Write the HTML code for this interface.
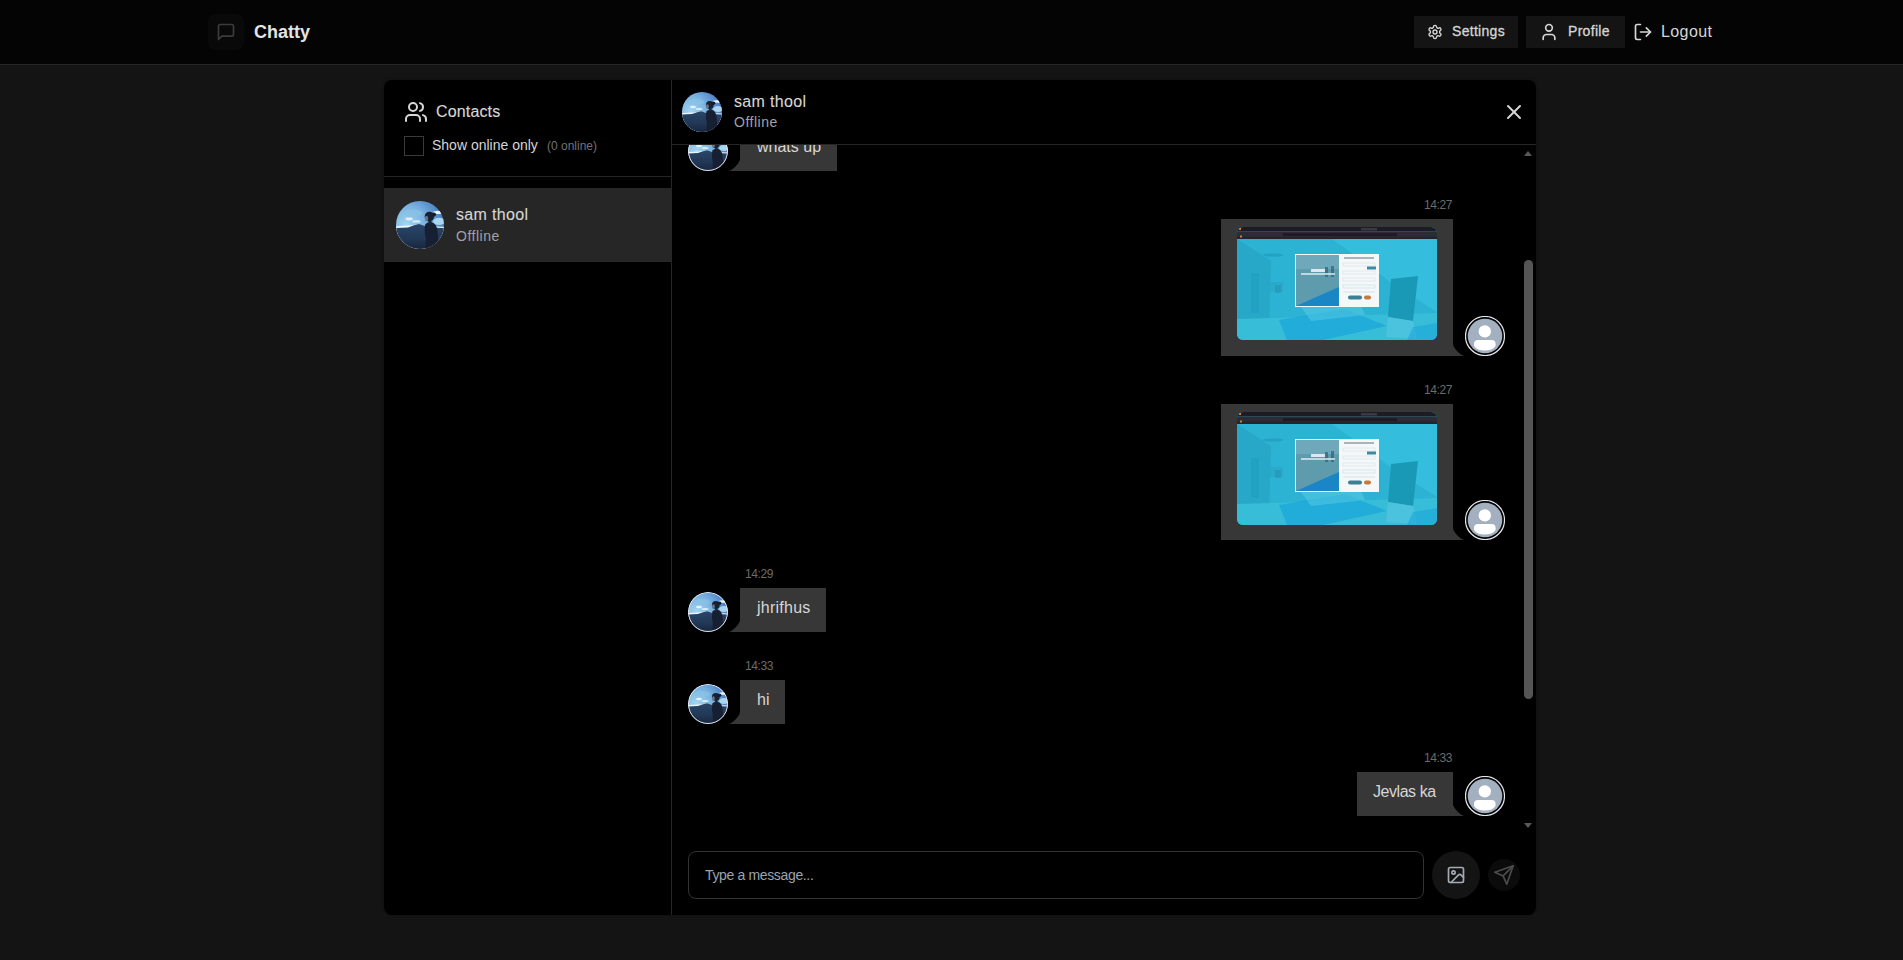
<!DOCTYPE html>
<html><head><meta charset="utf-8"><title>Chatty</title>
<style>
*{box-sizing:border-box;margin:0;padding:0}
html,body{width:1903px;height:960px;overflow:hidden;background:#141414;font-family:"Liberation Sans",sans-serif;color:#d6d6d6}
.a{position:absolute}
.t{position:absolute;white-space:nowrap;line-height:1}
svg.i{position:absolute;fill:none;stroke:currentColor;stroke-width:2;stroke-linecap:round;stroke-linejoin:round}
.bub{position:absolute;background:#373737}
.tail{position:absolute;width:12px;height:12px;fill:#373737}
.tm{position:absolute;white-space:nowrap;line-height:1;font-size:12px;color:#6b6b6b;letter-spacing:-0.4px}
.msg{position:absolute;white-space:nowrap;line-height:1;font-size:16px;color:#d6d6d6}
</style></head>
<body>
<svg width="0" height="0" style="position:absolute">
<defs>
<clipPath id="cc"><circle cx="24" cy="24" r="24"/></clipPath><clipPath id="cc40"><circle cx="20" cy="20" r="20"/></clipPath>
<linearGradient id="sky" x1="0" y1="0" x2="0.3" y2="1">
<stop offset="0" stop-color="#4f86cc"/><stop offset="0.35" stop-color="#7fb6e4"/><stop offset="0.55" stop-color="#b4ddf2"/></linearGradient>
<radialGradient id="sky2" cx="0.22" cy="0.5" r="0.85"><stop offset="0" stop-color="#a4d6f0"/><stop offset="0.5" stop-color="#76b0e0"/><stop offset="1" stop-color="#3f6fbc"/></radialGradient>
<linearGradient id="sea2" x1="0" y1="0" x2="0" y2="1"><stop offset="0" stop-color="#2a4669"/><stop offset="0.6" stop-color="#213756"/><stop offset="1" stop-color="#17263d"/></linearGradient>
<linearGradient id="sea" x1="0" y1="0" x2="0" y2="1">
<stop offset="0" stop-color="#2e5078"/><stop offset="1" stop-color="#1b2f4a"/></linearGradient>
<clipPath id="shotclip"><rect width="200" height="113" rx="6" ry="6"/></clipPath>
</defs>
</svg>

<!-- HEADER -->
<div class="a" style="left:0;top:0;width:1903px;height:64px;background:#040404"></div>
<div class="a" style="left:0;top:64px;width:1903px;height:1px;background:#262626"></div>
<div class="a" style="left:208px;top:14px;width:36px;height:36px;border-radius:8px;background:#090909"></div>
<svg class="i" style="left:216px;top:22px;color:#3c3c3c" width="20" height="20" viewBox="0 0 24 24"><path d="M21 15a2 2 0 0 1-2 2H7l-4 4V5a2 2 0 0 1 2-2h14a2 2 0 0 1 2 2z"/></svg>
<div class="t" id="chatty" style="left:254px;top:23px;font-size:18px;font-weight:700;color:#e4e4e4">Chatty</div>

<div class="a" style="left:1414px;top:16px;width:104px;height:32px;background:#141414"></div>
<svg class="i" style="left:1427px;top:24px;color:#d6d6d6" width="16" height="16" viewBox="0 0 24 24"><path d="M12.22 2h-.44a2 2 0 0 0-2 2v.18a2 2 0 0 1-1 1.73l-.43.25a2 2 0 0 1-2 0l-.15-.08a2 2 0 0 0-2.73.73l-.22.38a2 2 0 0 0 .73 2.73l.15.1a2 2 0 0 1 1 1.72v.51a2 2 0 0 1-1 1.74l-.15.09a2 2 0 0 0-.73 2.73l.22.38a2 2 0 0 0 2.73.73l.15-.08a2 2 0 0 1 2 0l.43.25a2 2 0 0 1 1 1.73V20a2 2 0 0 0 2 2h.44a2 2 0 0 0 2-2v-.18a2 2 0 0 1 1-1.73l.43-.25a2 2 0 0 1 2 0l.15.08a2 2 0 0 0 2.73-.73l.22-.39a2 2 0 0 0-.73-2.73l-.15-.08a2 2 0 0 1-1-1.74v-.5a2 2 0 0 1 1-1.74l.15-.09a2 2 0 0 0 .73-2.73l-.22-.38a2 2 0 0 0-2.73-.73l-.15.08a2 2 0 0 1-2 0l-.43-.25a2 2 0 0 1-1-1.73V4a2 2 0 0 0-2-2z"/><circle cx="12" cy="12" r="3"/></svg>
<div class="t" id="settings" style="left:1452px;top:24px;font-size:14px;-webkit-text-stroke:0.3px;letter-spacing:0.3px">Settings</div>

<div class="a" style="left:1526px;top:16px;width:99px;height:32px;background:#141414"></div>
<svg class="i" style="left:1539px;top:22px;color:#d6d6d6" width="20" height="20" viewBox="0 0 24 24"><path d="M19 21v-2a4 4 0 0 0-4-4H9a4 4 0 0 0-4 4v2"/><circle cx="12" cy="7" r="4"/></svg>
<div class="t" id="profile" style="left:1568px;top:24px;font-size:14px;-webkit-text-stroke:0.3px;letter-spacing:0.3px">Profile</div>

<svg class="i" style="left:1633px;top:22px;color:#d6d6d6" width="20" height="20" viewBox="0 0 24 24"><path d="M9 21H5a2 2 0 0 1-2-2V5a2 2 0 0 1 2-2h4"/><polyline points="16 17 21 12 16 7"/><line x1="21" x2="9" y1="12" y2="12"/></svg>
<div class="t" id="logout" style="left:1661px;top:24px;font-size:16px;letter-spacing:0.4px">Logout</div>

<!-- CONTAINER -->
<div class="a" style="left:384px;top:80px;width:1152px;height:835px;background:#000;border-radius:8px;box-shadow:0 0 3px rgba(0,0,0,.3)"></div>
<div class="a" style="left:671px;top:80px;width:1px;height:835px;background:#262626"></div>

<!-- SIDEBAR -->
<svg class="i" style="left:404px;top:100px;color:#d6d6d6" width="24" height="24" viewBox="0 0 24 24"><path d="M16 21v-2a4 4 0 0 0-4-4H6a4 4 0 0 0-4 4v2"/><circle cx="9" cy="7" r="4"/><path d="M22 21v-2a4 4 0 0 0-3-3.87"/><path d="M16 3.13a4 4 0 0 1 0 7.75"/></svg>
<div class="t" id="contacts" style="left:436px;top:104px;font-size:16px;letter-spacing:0.15px;-webkit-text-stroke:0.15px">Contacts</div>
<div class="a" style="left:404px;top:136px;width:20px;height:20px;border:1px solid #3a3a3a"></div>
<div class="t" id="showon" style="left:432px;top:138px;font-size:14px">Show online only</div>
<div class="t" id="zeroon" style="left:547px;top:140px;font-size:12px;color:#71717a">(0 online)</div>
<div class="a" style="left:384px;top:176px;width:287px;height:1px;background:#262626"></div>

<div class="a" style="left:384px;top:188px;width:287px;height:74px;background:#262626"></div>
<svg class="a" style="left:396px;top:201px" width="48" height="48" viewBox="0 0 40 40"><g clip-path="url(#cc40)">
<rect width="40" height="40" fill="url(#sky2)"/>
<ellipse cx="14" cy="10" rx="8" ry="3" fill="#8cc2e6" opacity=".7"/>
<ellipse cx="11" cy="15" rx="3" ry="1.2" fill="#e4f3fa"/>
<ellipse cx="17" cy="17" rx="3.5" ry="1" fill="#d6eef8"/>
<ellipse cx="35" cy="9.5" rx="4" ry="1.3" fill="#e8f5fb"/>
<ellipse cx="36" cy="17" rx="5" ry="3" fill="#a8d6ee"/>
<path d="M0 21 Q6 20.5 11 20.5 L18 19.5 L26 21 L40 21.5 L40 40 L0 40Z" fill="#eef7fb"/>
<path d="M0 22.5 L10 22 L15 20.2 L19 19.2 L23 20.5 L28 22 L40 22.5 L40 40 L0 40Z" fill="url(#sea2)"/>
<path d="M24.3 19.5 Q26 17.3 29.5 17.8 Q33.8 19 34.6 24.5 L35.6 40 L24.5 40 L24.8 31 Q23.3 26 24.3 19.5Z" fill="#172033"/>
<ellipse cx="27.8" cy="13" rx="3.9" ry="4.1" fill="#1a2232"/>
<circle cx="31.6" cy="11.3" r="1.8" fill="#161c2a"/>
<ellipse cx="25.4" cy="14.6" rx="1.4" ry="2.3" fill="#66788a"/>
<rect x="27" y="16.5" width="2.6" height="2.5" fill="#1c2636"/>
</g></svg>
<div class="t" id="cname" style="left:456px;top:207px;font-size:16px;letter-spacing:0.35px;-webkit-text-stroke:0.1px">sam thool</div>
<div class="t" id="coff" style="left:456px;top:229px;font-size:14px;color:#a1a1aa;letter-spacing:0.5px">Offline</div>

<!-- CHAT HEADER -->
<svg class="a" style="left:682px;top:92px" width="40" height="40" viewBox="0 0 40 40"><g clip-path="url(#cc40)">
<rect width="40" height="40" fill="url(#sky2)"/>
<ellipse cx="14" cy="10" rx="8" ry="3" fill="#8cc2e6" opacity=".7"/>
<ellipse cx="11" cy="15" rx="3" ry="1.2" fill="#e4f3fa"/>
<ellipse cx="17" cy="17" rx="3.5" ry="1" fill="#d6eef8"/>
<ellipse cx="35" cy="9.5" rx="4" ry="1.3" fill="#e8f5fb"/>
<ellipse cx="36" cy="17" rx="5" ry="3" fill="#a8d6ee"/>
<path d="M0 21 Q6 20.5 11 20.5 L18 19.5 L26 21 L40 21.5 L40 40 L0 40Z" fill="#eef7fb"/>
<path d="M0 22.5 L10 22 L15 20.2 L19 19.2 L23 20.5 L28 22 L40 22.5 L40 40 L0 40Z" fill="url(#sea2)"/>
<path d="M24.3 19.5 Q26 17.3 29.5 17.8 Q33.8 19 34.6 24.5 L35.6 40 L24.5 40 L24.8 31 Q23.3 26 24.3 19.5Z" fill="#172033"/>
<ellipse cx="27.8" cy="13" rx="3.9" ry="4.1" fill="#1a2232"/>
<circle cx="31.6" cy="11.3" r="1.8" fill="#161c2a"/>
<ellipse cx="25.4" cy="14.6" rx="1.4" ry="2.3" fill="#66788a"/>
<rect x="27" y="16.5" width="2.6" height="2.5" fill="#1c2636"/>
</g></svg>
<div class="t" id="hname" style="left:734px;top:94px;font-size:16px;letter-spacing:0.35px;-webkit-text-stroke:0.1px">sam thool</div>
<div class="t" id="hoff" style="left:734px;top:115px;font-size:14px;color:#a1a1aa;letter-spacing:0.5px">Offline</div>
<svg class="i" style="left:1502px;top:100px;color:#d6d6d6" width="24" height="24" viewBox="0 0 24 24"><path d="M18 6 6 18"/><path d="m6 6 12 12"/></svg>
<div class="a" style="left:672px;top:144px;width:864px;height:1px;background:#262626"></div>

<!-- MESSAGES -->
<div class="a" id="msgs" style="left:672px;top:145px;width:864px;height:690px;overflow:hidden">
<svg class="a" style="left:16px;top:-14px;border-radius:50%" width="40" height="40" viewBox="0 0 40 40"><g clip-path="url(#cc40)">
<rect width="40" height="40" fill="url(#sky2)"/>
<ellipse cx="14" cy="10" rx="8" ry="3" fill="#8cc2e6" opacity=".7"/>
<ellipse cx="11" cy="15" rx="3" ry="1.2" fill="#e4f3fa"/>
<ellipse cx="17" cy="17" rx="3.5" ry="1" fill="#d6eef8"/>
<ellipse cx="35" cy="9.5" rx="4" ry="1.3" fill="#e8f5fb"/>
<ellipse cx="36" cy="17" rx="5" ry="3" fill="#a8d6ee"/>
<path d="M0 21 Q6 20.5 11 20.5 L18 19.5 L26 21 L40 21.5 L40 40 L0 40Z" fill="#eef7fb"/>
<path d="M0 22.5 L10 22 L15 20.2 L19 19.2 L23 20.5 L28 22 L40 22.5 L40 40 L0 40Z" fill="url(#sea2)"/>
<path d="M24.3 19.5 Q26 17.3 29.5 17.8 Q33.8 19 34.6 24.5 L35.6 40 L24.5 40 L24.8 31 Q23.3 26 24.3 19.5Z" fill="#172033"/>
<ellipse cx="27.8" cy="13" rx="3.9" ry="4.1" fill="#1a2232"/>
<circle cx="31.6" cy="11.3" r="1.8" fill="#161c2a"/>
<ellipse cx="25.4" cy="14.6" rx="1.4" ry="2.3" fill="#66788a"/>
<rect x="27" y="16.5" width="2.6" height="2.5" fill="#1c2636"/>
</g><circle cx="20" cy="20" r="19.5" fill="none" stroke="#e5e7eb" stroke-width="1"/></svg>
<div class="bub" style="left:68px;top:-18px;width:97px;height:44px"></div>
<svg class="tail" style="left:56px;top:14px" viewBox="0 0 12 12"><path d="M0 12 L12 12 L12 0 C12 4 4 12 0 12Z"/></svg>
<div class="msg" style="left:85px;top:-6px">whats up</div>
<div class="tm" style="left:600px;top:54px;width:180px;text-align:right">14:27</div>
<div class="bub" style="left:549px;top:74px;width:232px;height:137px"></div>
<svg class="tail" style="left:781px;top:199px" viewBox="0 0 12 12"><path d="M0 12 L12 12 C8 12 0 4 0 0Z"/></svg>
<svg class="a" style="left:565px;top:82px" width="200" height="113" viewBox="0 0 200 113"><g clip-path="url(#shotclip)">
<rect width="200" height="113" fill="#2cb2d2"/>
<rect width="200" height="4.5" fill="#1d1c24"/>
<rect y="4.5" width="200" height="7.5" fill="#2d2c34"/>
<rect x="46" y="6.3" width="114" height="2.6" fill="#1c1b22"/>
<rect y="9.5" width="200" height="2.5" fill="#25242c"/>
<rect x="2" y="1" width="2" height="2" fill="#d9792e"/>
<rect x="3" y="8.5" width="2" height="2" fill="#d9792e"/>
<rect x="124" y="1" width="16" height="2.5" fill="#3a3944"/>
<polygon points="95,12 200,12 200,85 160,60 120,30" fill="#3cc6e6" opacity=".55"/>
<polygon points="0,12 34,34 32,104 0,113" fill="#229cbf" opacity=".45"/>
<ellipse cx="36" cy="28" rx="10" ry="1.6" fill="#1b92b3" opacity=".5"/>
<rect x="14" y="46" width="8" height="40" fill="#1f95b8" opacity=".4"/>
<rect x="30" y="55" width="16" height="10" fill="#2aa5c6" opacity=".6"/>
<rect x="38" y="58" width="6" height="8" fill="#1d8fb0" opacity=".5"/>
<polygon points="0,92 200,86 200,113 0,113" fill="#38bdd9"/>
<polygon points="42,93 108,82 150,99 86,113 50,113" fill="#17a3d8" opacity=".65"/>
<polygon points="64,80 122,74 128,88 74,94" fill="#5fd0e8" opacity=".45"/>
<polygon points="154,52 181,49 176,94 151,90" fill="#1999b6"/>
<polygon points="151,90 176,94 180,112 149,110" fill="#55c6e0" opacity=".7"/>
<polygon points="176,100 200,96 200,113 170,113" fill="#1aa6d8" opacity=".6"/>
<rect x="58" y="27" width="84" height="53" fill="#f5f8f9"/>
<rect x="59" y="28" width="43" height="51" fill="#5e9bad"/>
<rect x="59" y="28" width="43" height="14" fill="#6fa8bb"/>
<rect x="88" y="40" width="3" height="10" fill="#2f6278" opacity=".7"/>
<rect x="94" y="39" width="3" height="11" fill="#2f6278" opacity=".7"/>
<polygon points="59,79 102,60 102,79" fill="#1a86c6"/>
<rect x="74" y="42" width="14" height="3" fill="#f2f6f8" opacity=".85"/>
<rect x="64" y="46" width="34" height="2" fill="#e8f2f4" opacity=".7"/>
<rect x="107" y="30" width="30" height="2" fill="#a9b4ba"/>
<rect x="106" y="36" width="32" height="3" fill="none" stroke="#d4dde1" stroke-width=".6"/>
<rect x="130" y="39.5" width="9" height="3" fill="#3d8aa2"/>
<rect x="106" y="44" width="32" height="3" fill="none" stroke="#d4dde1" stroke-width=".6"/>
<rect x="106" y="51" width="32" height="3" fill="none" stroke="#d4dde1" stroke-width=".6"/>
<rect x="106" y="58" width="32" height="3" fill="none" stroke="#bfd9e6" stroke-width=".6"/>
<rect x="106" y="64" width="32" height="2" fill="#e6ecef"/>
<rect x="111" y="68.5" width="14" height="4" rx="2" fill="#3b7f95"/>
<rect x="127" y="68.5" width="7" height="4" rx="2" fill="#c47a3c"/>
</g></svg>
<svg class="a" style="left:793px;top:171px" width="40" height="40" viewBox="0 0 40 40"><circle cx="20" cy="20" r="19.5" fill="#000" stroke="#e5e7eb" stroke-width="1.2"/>
<circle cx="20" cy="20" r="17.3" fill="#a3b0c0"/>
<circle cx="19.8" cy="15.4" r="6.2" fill="#fff"/>
<path d="M13 24 h13.6 a4 4 0 0 1 4 4 v2 q-3 4.6 -10.8 4.6 q-7.8 0 -10.8 -4.6 v-2 a4 4 0 0 1 4 -4z" fill="#fff"/></svg>
<div class="tm" style="left:600px;top:239px;width:180px;text-align:right">14:27</div>
<div class="bub" style="left:549px;top:259px;width:232px;height:136px"></div>
<svg class="tail" style="left:781px;top:383px" viewBox="0 0 12 12"><path d="M0 12 L12 12 C8 12 0 4 0 0Z"/></svg>
<svg class="a" style="left:565px;top:267px" width="200" height="113" viewBox="0 0 200 113"><g clip-path="url(#shotclip)">
<rect width="200" height="113" fill="#2cb2d2"/>
<rect width="200" height="4.5" fill="#1d1c24"/>
<rect y="4.5" width="200" height="7.5" fill="#2d2c34"/>
<rect x="46" y="6.3" width="114" height="2.6" fill="#1c1b22"/>
<rect y="9.5" width="200" height="2.5" fill="#25242c"/>
<rect x="2" y="1" width="2" height="2" fill="#d9792e"/>
<rect x="3" y="8.5" width="2" height="2" fill="#d9792e"/>
<rect x="124" y="1" width="16" height="2.5" fill="#3a3944"/>
<polygon points="95,12 200,12 200,85 160,60 120,30" fill="#3cc6e6" opacity=".55"/>
<polygon points="0,12 34,34 32,104 0,113" fill="#229cbf" opacity=".45"/>
<ellipse cx="36" cy="28" rx="10" ry="1.6" fill="#1b92b3" opacity=".5"/>
<rect x="14" y="46" width="8" height="40" fill="#1f95b8" opacity=".4"/>
<rect x="30" y="55" width="16" height="10" fill="#2aa5c6" opacity=".6"/>
<rect x="38" y="58" width="6" height="8" fill="#1d8fb0" opacity=".5"/>
<polygon points="0,92 200,86 200,113 0,113" fill="#38bdd9"/>
<polygon points="42,93 108,82 150,99 86,113 50,113" fill="#17a3d8" opacity=".65"/>
<polygon points="64,80 122,74 128,88 74,94" fill="#5fd0e8" opacity=".45"/>
<polygon points="154,52 181,49 176,94 151,90" fill="#1999b6"/>
<polygon points="151,90 176,94 180,112 149,110" fill="#55c6e0" opacity=".7"/>
<polygon points="176,100 200,96 200,113 170,113" fill="#1aa6d8" opacity=".6"/>
<rect x="58" y="27" width="84" height="53" fill="#f5f8f9"/>
<rect x="59" y="28" width="43" height="51" fill="#5e9bad"/>
<rect x="59" y="28" width="43" height="14" fill="#6fa8bb"/>
<rect x="88" y="40" width="3" height="10" fill="#2f6278" opacity=".7"/>
<rect x="94" y="39" width="3" height="11" fill="#2f6278" opacity=".7"/>
<polygon points="59,79 102,60 102,79" fill="#1a86c6"/>
<rect x="74" y="42" width="14" height="3" fill="#f2f6f8" opacity=".85"/>
<rect x="64" y="46" width="34" height="2" fill="#e8f2f4" opacity=".7"/>
<rect x="107" y="30" width="30" height="2" fill="#a9b4ba"/>
<rect x="106" y="36" width="32" height="3" fill="none" stroke="#d4dde1" stroke-width=".6"/>
<rect x="130" y="39.5" width="9" height="3" fill="#3d8aa2"/>
<rect x="106" y="44" width="32" height="3" fill="none" stroke="#d4dde1" stroke-width=".6"/>
<rect x="106" y="51" width="32" height="3" fill="none" stroke="#d4dde1" stroke-width=".6"/>
<rect x="106" y="58" width="32" height="3" fill="none" stroke="#bfd9e6" stroke-width=".6"/>
<rect x="106" y="64" width="32" height="2" fill="#e6ecef"/>
<rect x="111" y="68.5" width="14" height="4" rx="2" fill="#3b7f95"/>
<rect x="127" y="68.5" width="7" height="4" rx="2" fill="#c47a3c"/>
</g></svg>
<svg class="a" style="left:793px;top:355px" width="40" height="40" viewBox="0 0 40 40"><circle cx="20" cy="20" r="19.5" fill="#000" stroke="#e5e7eb" stroke-width="1.2"/>
<circle cx="20" cy="20" r="17.3" fill="#a3b0c0"/>
<circle cx="19.8" cy="15.4" r="6.2" fill="#fff"/>
<path d="M13 24 h13.6 a4 4 0 0 1 4 4 v2 q-3 4.6 -10.8 4.6 q-7.8 0 -10.8 -4.6 v-2 a4 4 0 0 1 4 -4z" fill="#fff"/></svg>
<div class="tm" style="left:73px;top:423px">14:29</div>
<div class="bub" style="left:68px;top:443px;width:86px;height:44px"></div>
<svg class="tail" style="left:56px;top:475px" viewBox="0 0 12 12"><path d="M0 12 L12 12 L12 0 C12 4 4 12 0 12Z"/></svg>
<div class="msg" style="left:85px;top:455px;letter-spacing:0.25px">jhrifhus</div>
<svg class="a" style="left:16px;top:447px;border-radius:50%" width="40" height="40" viewBox="0 0 40 40"><g clip-path="url(#cc40)">
<rect width="40" height="40" fill="url(#sky2)"/>
<ellipse cx="14" cy="10" rx="8" ry="3" fill="#8cc2e6" opacity=".7"/>
<ellipse cx="11" cy="15" rx="3" ry="1.2" fill="#e4f3fa"/>
<ellipse cx="17" cy="17" rx="3.5" ry="1" fill="#d6eef8"/>
<ellipse cx="35" cy="9.5" rx="4" ry="1.3" fill="#e8f5fb"/>
<ellipse cx="36" cy="17" rx="5" ry="3" fill="#a8d6ee"/>
<path d="M0 21 Q6 20.5 11 20.5 L18 19.5 L26 21 L40 21.5 L40 40 L0 40Z" fill="#eef7fb"/>
<path d="M0 22.5 L10 22 L15 20.2 L19 19.2 L23 20.5 L28 22 L40 22.5 L40 40 L0 40Z" fill="url(#sea2)"/>
<path d="M24.3 19.5 Q26 17.3 29.5 17.8 Q33.8 19 34.6 24.5 L35.6 40 L24.5 40 L24.8 31 Q23.3 26 24.3 19.5Z" fill="#172033"/>
<ellipse cx="27.8" cy="13" rx="3.9" ry="4.1" fill="#1a2232"/>
<circle cx="31.6" cy="11.3" r="1.8" fill="#161c2a"/>
<ellipse cx="25.4" cy="14.6" rx="1.4" ry="2.3" fill="#66788a"/>
<rect x="27" y="16.5" width="2.6" height="2.5" fill="#1c2636"/>
</g><circle cx="20" cy="20" r="19.5" fill="none" stroke="#e5e7eb" stroke-width="1"/></svg>
<div class="tm" style="left:73px;top:515px">14:33</div>
<div class="bub" style="left:68px;top:535px;width:45px;height:44px"></div>
<svg class="tail" style="left:56px;top:567px" viewBox="0 0 12 12"><path d="M0 12 L12 12 L12 0 C12 4 4 12 0 12Z"/></svg>
<div class="msg" style="left:85px;top:547px">hi</div>
<svg class="a" style="left:16px;top:539px;border-radius:50%" width="40" height="40" viewBox="0 0 40 40"><g clip-path="url(#cc40)">
<rect width="40" height="40" fill="url(#sky2)"/>
<ellipse cx="14" cy="10" rx="8" ry="3" fill="#8cc2e6" opacity=".7"/>
<ellipse cx="11" cy="15" rx="3" ry="1.2" fill="#e4f3fa"/>
<ellipse cx="17" cy="17" rx="3.5" ry="1" fill="#d6eef8"/>
<ellipse cx="35" cy="9.5" rx="4" ry="1.3" fill="#e8f5fb"/>
<ellipse cx="36" cy="17" rx="5" ry="3" fill="#a8d6ee"/>
<path d="M0 21 Q6 20.5 11 20.5 L18 19.5 L26 21 L40 21.5 L40 40 L0 40Z" fill="#eef7fb"/>
<path d="M0 22.5 L10 22 L15 20.2 L19 19.2 L23 20.5 L28 22 L40 22.5 L40 40 L0 40Z" fill="url(#sea2)"/>
<path d="M24.3 19.5 Q26 17.3 29.5 17.8 Q33.8 19 34.6 24.5 L35.6 40 L24.5 40 L24.8 31 Q23.3 26 24.3 19.5Z" fill="#172033"/>
<ellipse cx="27.8" cy="13" rx="3.9" ry="4.1" fill="#1a2232"/>
<circle cx="31.6" cy="11.3" r="1.8" fill="#161c2a"/>
<ellipse cx="25.4" cy="14.6" rx="1.4" ry="2.3" fill="#66788a"/>
<rect x="27" y="16.5" width="2.6" height="2.5" fill="#1c2636"/>
</g><circle cx="20" cy="20" r="19.5" fill="none" stroke="#e5e7eb" stroke-width="1"/></svg>
<div class="tm" style="left:600px;top:607px;width:180px;text-align:right">14:33</div>
<div class="bub" style="left:685px;top:627px;width:96px;height:44px"></div>
<svg class="tail" style="left:781px;top:659px" viewBox="0 0 12 12"><path d="M0 12 L12 12 C8 12 0 4 0 0Z"/></svg>
<div class="msg" style="left:701px;top:639px;letter-spacing:-0.45px">Jevlas ka</div>
<svg class="a" style="left:793px;top:631px" width="40" height="40" viewBox="0 0 40 40"><circle cx="20" cy="20" r="19.5" fill="#000" stroke="#e5e7eb" stroke-width="1.2"/>
<circle cx="20" cy="20" r="17.3" fill="#a3b0c0"/>
<circle cx="19.8" cy="15.4" r="6.2" fill="#fff"/>
<path d="M13 24 h13.6 a4 4 0 0 1 4 4 v2 q-3 4.6 -10.8 4.6 q-7.8 0 -10.8 -4.6 v-2 a4 4 0 0 1 4 -4z" fill="#fff"/></svg>
<div class="a" style="left:852px;top:6px;width:0;height:0;border-left:4.75px solid transparent;border-right:4.75px solid transparent;border-bottom:5px solid #585858"></div>
<div class="a" style="left:852px;top:115px;width:9px;height:439px;border-radius:4.5px;background:#555"></div>
<div class="a" style="left:852px;top:678px;width:0;height:0;border-left:4.75px solid transparent;border-right:4.75px solid transparent;border-top:5px solid #585858"></div>
</div>

<!-- INPUT -->
<div class="a" style="left:688px;top:851px;width:736px;height:48px;border:1px solid #333;border-radius:8px"></div>
<div class="t" id="ph" style="left:705px;top:868px;font-size:14px;color:#9ca3af;letter-spacing:-0.35px">Type a message...</div>
<div class="a" style="left:1432px;top:851px;width:48px;height:48px;border-radius:50%;background:#141414"></div>
<svg class="i" style="left:1446px;top:865px;color:#a4abb4" width="20" height="20" viewBox="0 0 24 24"><rect width="18" height="18" x="3" y="3" rx="2" ry="2"/><circle cx="9" cy="9" r="2"/><path d="m21 15-3.086-3.086a2 2 0 0 0-2.828 0L6 21"/></svg>
<div class="a" style="left:1488px;top:859px;width:32px;height:32px;border-radius:50%;background:#0b0b0b"></div>
<svg class="i" style="left:1493px;top:864px;color:#4c4c4c;stroke-width:1.8" width="22" height="22" viewBox="0 0 24 24"><path d="m22 2-7 20-4-9-9-4Z"/><path d="M22 2 11 13"/></svg>

</body></html>
